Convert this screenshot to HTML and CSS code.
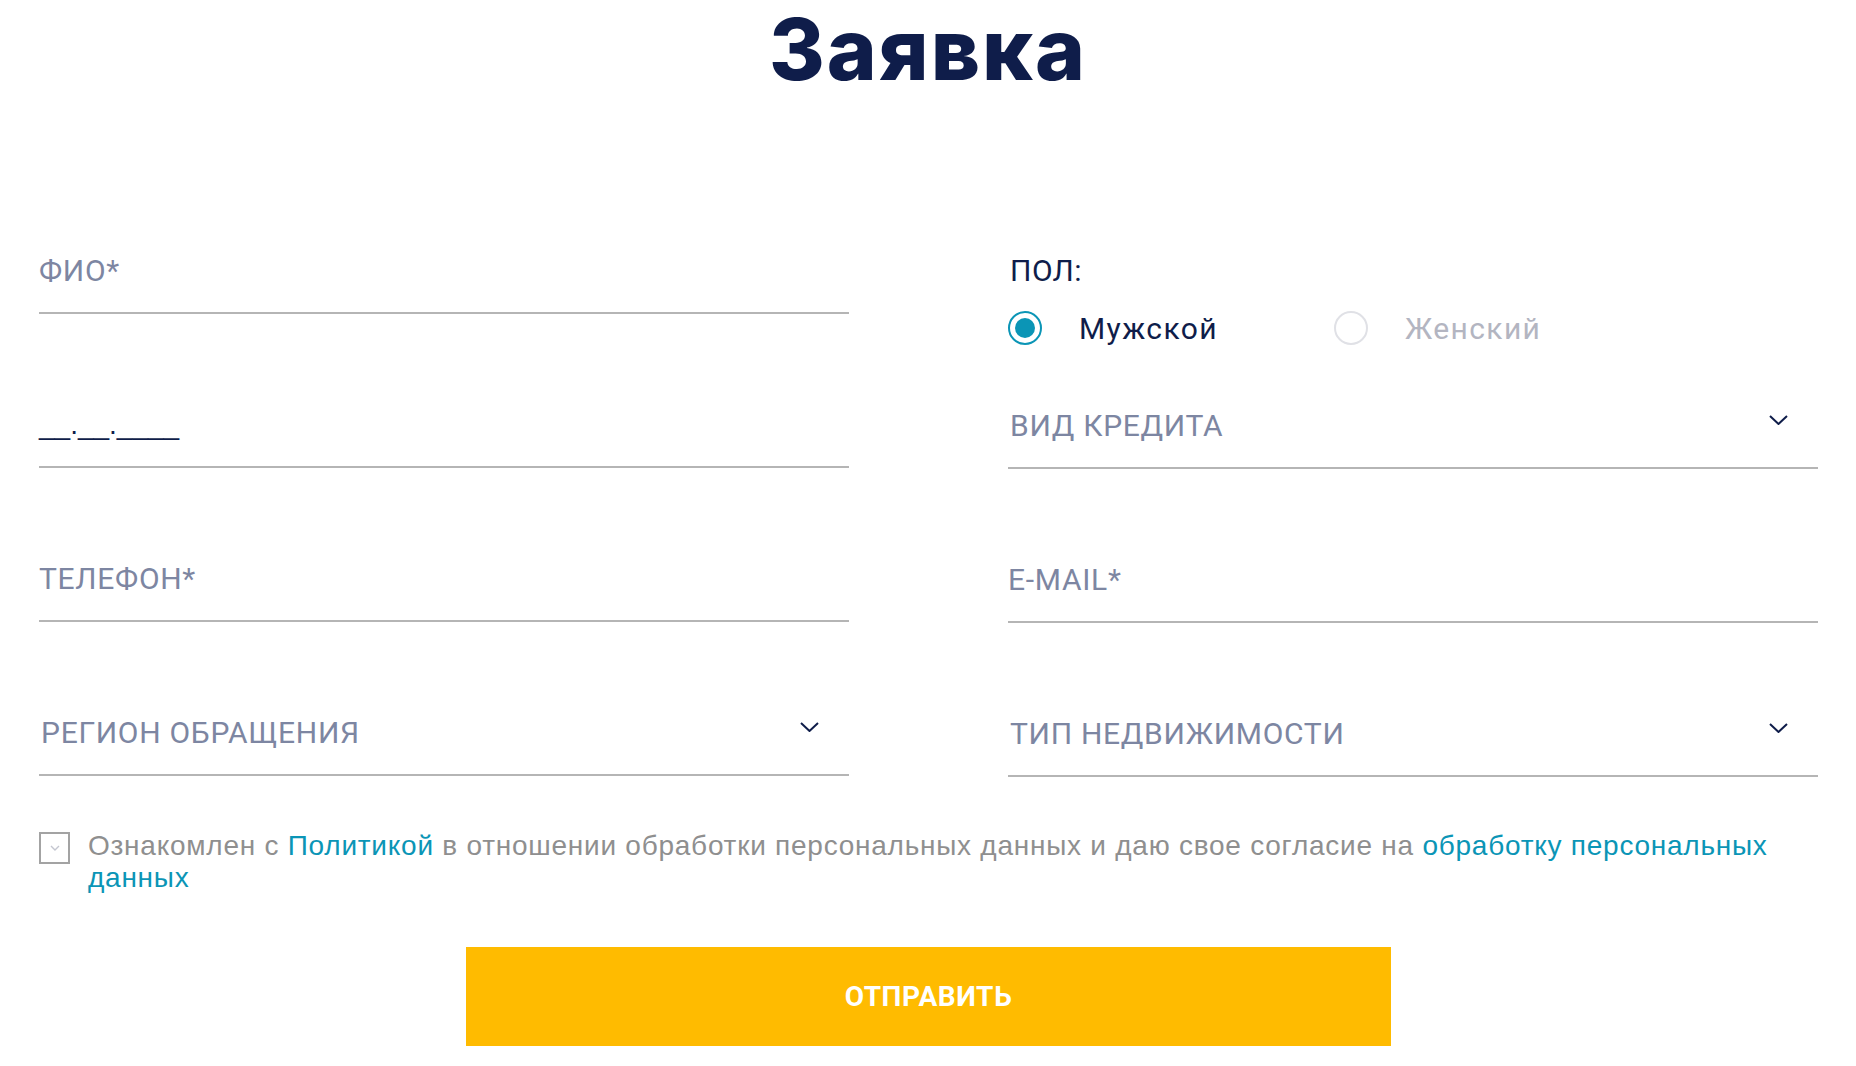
FILE: index.html
```html
<!DOCTYPE html>
<html lang="ru">
<head>
<meta charset="utf-8">
<title>Заявка</title>
<link rel="stylesheet" href="styles.css">
</head>
<body>
<main class="page">
  <h1 class="title">Заявка</h1>
  <form class="form">
    <div class="cols">
      <div class="col">
        <div class="field"><span class="label">ФИО*</span></div>
        <div class="field"><span class="mask">__.__.____</span></div>
        <div class="field"><span class="label">ТЕЛЕФОН*</span></div>
        <div class="field field--select">
          <span class="label">РЕГИОН ОБРАЩЕНИЯ</span>
          <svg class="chev" width="19" height="10" viewBox="0 0 19 10"><polyline points="1,1 9.5,9 18,1" fill="none" stroke="#0f1d4a" stroke-width="2"/></svg>
        </div>
      </div>
      <div class="col">
        <div class="gender">
          <div class="gender-label">ПОЛ:</div>
          <div class="radios">
            <label class="radio radio--on"><span class="dot"></span><span class="radio-text">Мужской</span></label>
            <label class="radio"><span class="dot"></span><span class="radio-text">Женский</span></label>
          </div>
        </div>
        <div class="field field--short field--select">
          <span class="label">ВИД КРЕДИТА</span>
          <svg class="chev" width="19" height="10" viewBox="0 0 19 10"><polyline points="1,1 9.5,9 18,1" fill="none" stroke="#0f1d4a" stroke-width="2"/></svg>
        </div>
        <div class="field"><span class="label">E-MAIL*</span></div>
        <div class="field field--select">
          <span class="label">ТИП НЕДВИЖИМОСТИ</span>
          <svg class="chev" width="19" height="10" viewBox="0 0 19 10"><polyline points="1,1 9.5,9 18,1" fill="none" stroke="#0f1d4a" stroke-width="2"/></svg>
        </div>
      </div>
    </div>
    <div class="consent">
      <span class="checkbox"><svg width="10" height="6" viewBox="0 0 10 6"><polyline points="1,1 5,5 9,1" fill="none" stroke="#c4c6d0" stroke-width="1.4"/></svg></span>
      <p class="consent-text">Ознакомлен с <a class="link" href="#">Политикой</a> в отношении обработки персональных данных и даю свое согласие на <a class="link" href="#">обработку персональных данных</a></p>
    </div>
    <div class="actions">
      <button class="submit" type="button">ОТПРАВИТЬ</button>
    </div>
  </form>
</main>
</body>
</html>
```

FILE: styles.css
```css
html, body {
  margin: 0;
  padding: 0;
  background: #ffffff;
}

body {
  font-family: Roboto, "Liberation Sans", sans-serif;
}

.title {
  margin: 0;
  box-sizing: border-box;
  height: 160px;
  padding-top: 7px;
  text-align: center;
  font-family: Inter, "Noto Sans", sans-serif;
  font-weight: 800;
  font-size: 85px;
  line-height: 1;
  letter-spacing: 2px;
  color: #0f1d4a;
}

.cols {
  display: flex;
  gap: 159px;
  padding: 0 38px 0 39px;
}

.col {
  flex: 1;
  display: flex;
  flex-direction: column;
}

.field {
  position: relative;
  box-sizing: border-box;
  height: 154px;
  border-bottom: 2px solid #b5b5b5;
  display: flex;
  align-items: flex-end;
  padding-bottom: 21px;
}

.field--short {
  height: 121px;
}

.label {
  font-size: 30px;
  line-height: 40px;
  letter-spacing: 0.7px;
  color: #7d86a2;
}

.field--select .label {
  padding-left: 2px;
}

.mask {
  font-family: "Liberation Sans", sans-serif;
  font-size: 28px;
  line-height: 40px;
  color: #0f1d4a;
}

.chev {
  position: absolute;
  right: 30px;
  bottom: 42px;
}

.gender {
  box-sizing: border-box;
  height: 188px;
  padding-top: 91px;
}

.gender-label {
  font-size: 30px;
  line-height: 40px;
  letter-spacing: 0.5px;
  color: #0f1d4a;
  padding-left: 2px;
}

.radios {
  margin-top: 17px;
  display: flex;
  gap: 116px;
}

.radio {
  display: flex;
  align-items: center;
  gap: 37px;
  height: 40px;
  font-size: 30px;
  letter-spacing: 1.4px;
  color: #b3b5c1;
}

.radio--on {
  color: #0f1d4a;
}

.dot {
  box-sizing: border-box;
  width: 34px;
  height: 34px;
  border-radius: 50%;
  border: 2px solid #e0e1e6;
  display: flex;
  align-items: center;
  justify-content: center;
}

.radio--on .dot {
  border-color: #0b95b6;
}

.radio--on .dot::after {
  content: "";
  width: 20px;
  height: 20px;
  border-radius: 50%;
  background: #0b95b6;
}

.consent {
  margin-top: 53px;
  padding: 0 38px 0 39px;
  display: flex;
  align-items: flex-start;
  gap: 18px;
}

.checkbox {
  flex: none;
  box-sizing: border-box;
  width: 31px;
  height: 32px;
  margin-top: 2px;
  border: 2px solid #a3a3a3;
  display: flex;
  align-items: center;
  justify-content: center;
}

.consent-text {
  margin: 0;
  font-family: "Liberation Sans", sans-serif;
  font-size: 28px;
  line-height: 32px;
  letter-spacing: 0.75px;
  color: #8f8f8f;
}

.link {
  color: #0b95b6;
  text-decoration: none;
}

.actions {
  margin-top: 53px;
  display: flex;
  justify-content: center;
  padding-left: 1px;
}

.submit {
  width: 925px;
  height: 99px;
  border: none;
  background: #ffbb00;
  color: #ffffff;
  font-family: Roboto, "Liberation Sans", sans-serif;
  font-weight: 700;
  font-size: 28px;
  letter-spacing: 0.6px;
  cursor: pointer;
}
```
